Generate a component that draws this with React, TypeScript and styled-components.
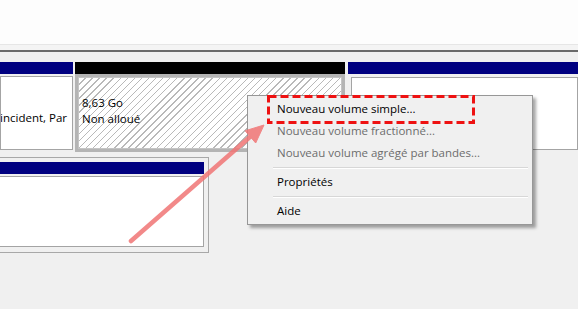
import React from 'react';
import styled, { createGlobalStyle } from 'styled-components';

const GlobalStyle = createGlobalStyle`
  html, body { margin: 0; padding: 0; }
  body {
    background: #f0f0f0;
    font-family: "Open Sans", "Noto Sans", sans-serif;
    font-size: 11.5px;
    color: #000;
  }
`;

const Screen = styled.div`
  position: relative;
  width: 578px;
  height: 309px;
  overflow: hidden;
  background: #f0f0f0;
`;

const VolumeList = styled.div`
  height: 44px;
  background: #fdfdfd;
  border-bottom: 1px solid #e6e6e6;
`;

const Splitter = styled.div`
  height: 5px;
  background: #f4f4f4;
  border-bottom: 2px solid #6a6a6a;
`;

const DiskArea = styled.div`
  padding-top: 10px;
`;

const DiskRow = styled.div`
  display: flex;
`;

const Partition = styled.div<{ $width?: number; $gap?: number }>`
  display: flex;
  flex-direction: column;
  width: ${(p) => (p.$width ? `${p.$width}px` : 'auto')};
  flex: ${(p) => (p.$width ? '0 0 auto' : '1')};
  margin-right: ${(p) => p.$gap || 0}px;
`;

const Header = styled.div<{ $color: string }>`
  height: 12px;
  background: ${(p) => p.$color};
`;

const Body = styled.div<{ $frame?: string; $pad?: string }>`
  height: 78px;
  box-sizing: border-box;
  padding: ${(p) => p.$pad || '2px'};
  background: ${(p) => p.$frame || '#f0f0f0'};
  display: flex;
`;

const Inner = styled.div<{ $hatched?: boolean; $alignEnd?: boolean }>`
  flex: 1;
  min-width: 0;
  box-sizing: border-box;
  border: 1px solid ${(p) => (p.$hatched ? '#c4c4c4' : '#a4a4a4')};
  background: ${(p) =>
    p.$hatched
      ? 'repeating-linear-gradient(135deg, #ffffff 0 4px, #b9b9b9 4px 5px)'
      : '#ffffff'};
  padding: 17px ${(p) => (p.$alignEnd ? '5px' : '4px')} 0 3px;
  display: flex;
  flex-direction: column;
  align-items: ${(p) => (p.$alignEnd ? 'flex-end' : 'flex-start')};
  overflow: hidden;
`;

const InfoLine = styled.div`
  line-height: 16px;
  white-space: nowrap;
  display: flex;
  justify-content: flex-end;
`;

const LowerDisk = styled.div`
  margin-top: 5px;
  width: 209px;
  height: 96px;
  box-sizing: border-box;
  border: 1px solid #a8a8a8;
  border-left: none;
  padding: 4px 4px 5px 0;
  display: flex;
  flex-direction: column;
`;

const LowerBody = styled.div`
  flex: 1;
  margin-top: 2px;
  background: #fff;
  border: 1px solid #a4a4a4;
  border-left: none;
`;

const Menu = styled.div`
  position: absolute;
  left: 247px;
  top: 95px;
  width: 286px;
  box-sizing: border-box;
  padding: 2px 0;
  background: #f0f0f0;
  border: 1px solid #979797;
  box-shadow: 3px 3px 3px rgba(0, 0, 0, 0.35);
`;

const MenuItem = styled.div<{ $disabled?: boolean }>`
  height: 22px;
  line-height: 22px;
  padding-left: 29px;
  white-space: nowrap;
  color: ${(p) => (p.$disabled ? '#6d6d6d' : '#000')};
`;

const Separator = styled.div`
  height: 7px;
  margin: 0 4px 0 25px;
  display: flex;
  flex-direction: column;
  justify-content: center;
  &::before {
    content: '';
    display: block;
    height: 1px;
    background: #d7d7d7;
    border-bottom: 1px solid #ffffff;
  }
`;

const Highlight = styled.svg`
  position: absolute;
  left: 19px;
  top: -1px;
  overflow: visible;
`;

const Overlay = styled.svg`
  position: absolute;
  left: 0;
  top: 0;
  pointer-events: none;
`;

const App = () => (
  <Screen>
    <GlobalStyle />
    <VolumeList />
    <Splitter />
    <DiskArea>
      <DiskRow>
        <Partition $width={73} $gap={2}>
          <Header $color="#000080" />
          <Body $pad="2px 0 2px 0">
            <Inner $alignEnd>
              <InfoLine>&nbsp;</InfoLine>
              <InfoLine>Sain (Démarrer, Vidage sur incident, Par</InfoLine>
            </Inner>
          </Body>
        </Partition>
        <Partition $width={270} $gap={3}>
          <Header $color="#000000" />
          <Body $frame="#b4b4b4" $pad="3px">
            <Inner $hatched>
              <InfoLine>8,63 Go</InfoLine>
              <InfoLine>Non alloué</InfoLine>
            </Inner>
          </Body>
        </Partition>
        <Partition>
          <Header $color="#000080" />
          <Body $pad="3px 0 2px 3px">
            <Inner />
          </Body>
        </Partition>
      </DiskRow>
      <LowerDisk>
        <Header $color="#000080" />
        <LowerBody />
      </LowerDisk>
    </DiskArea>

    <Menu>
      <MenuItem>Nouveau volume simple...</MenuItem>
      <MenuItem $disabled>Nouveau volume fractionné...</MenuItem>
      <MenuItem $disabled>Nouveau volume agrégé par bandes...</MenuItem>
      <Separator />
      <MenuItem>Propriétés</MenuItem>
      <Separator />
      <MenuItem>Aide</MenuItem>
      <Highlight width="208" height="29">
        <rect
          x="1.5"
          y="1.5"
          width="205"
          height="26"
          fill="none"
          stroke="#ee1111"
          strokeWidth="3"
          strokeDasharray="8 4"
        />
      </Highlight>
    </Menu>

    <Overlay width="578" height="309">
      <g fill="#f07575" stroke="#f07575" opacity="0.85">
        <line x1="131" y1="241" x2="251" y2="136" strokeWidth="4.5" strokeLinecap="round" />
        <polygon points="264,125 255.7,143 245.1,130.8" strokeWidth="1" strokeLinejoin="round" />
      </g>
    </Overlay>
  </Screen>
);

export default App;
